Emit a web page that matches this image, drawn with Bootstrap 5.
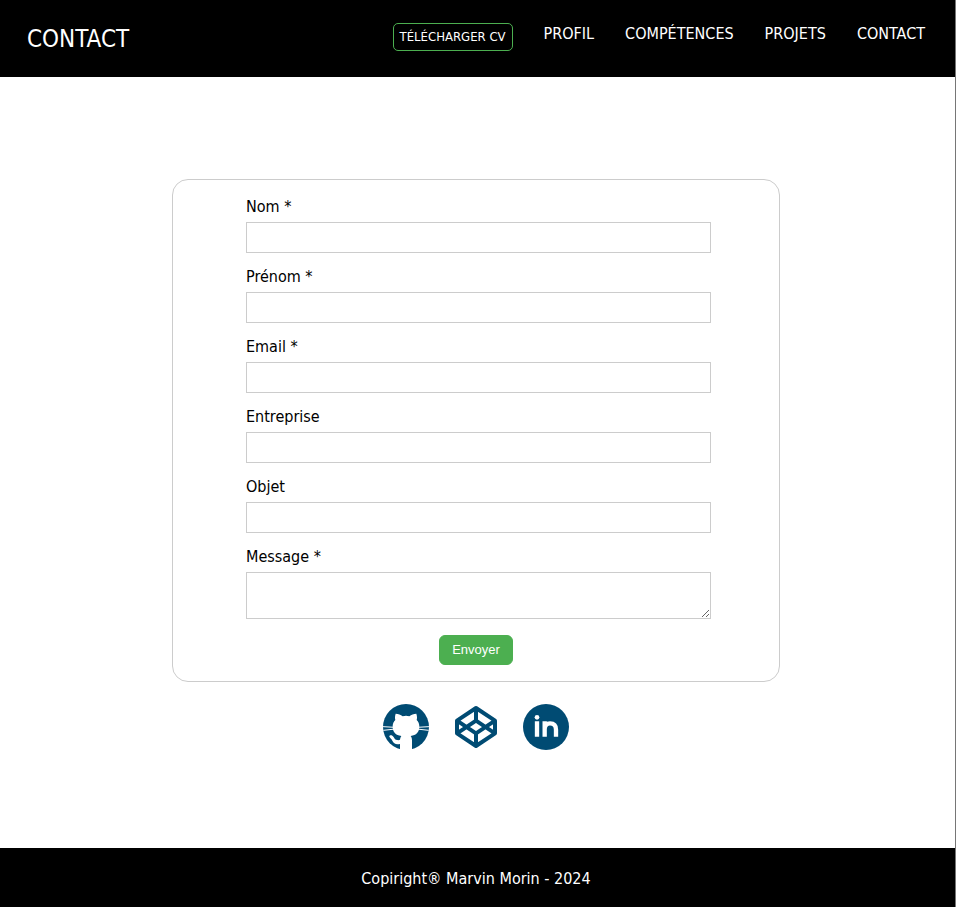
<!DOCTYPE html>
<html lang="fr">
<head>
<meta charset="utf-8">
<meta name="viewport" content="width=device-width, initial-scale=1">
<title>Contact</title>
<link href="https://cdn.jsdelivr.net/npm/bootstrap@5.3.0/dist/css/bootstrap.min.css" rel="stylesheet">
<style>
  body { font-family: "DejaVu Sans Condensed", "Noto Sans", sans-serif; font-size: 16px; line-height: 22px; color: #000; background: #fff; border-right: 1px solid #767676; }
  .site-header { background: #000; padding: 23px 30px 22px 27px; }
  .site-title { font-size: 24px; line-height: 32px; font-weight: 400; }
  .site-links { gap: 31px; }
  .btn-cv { --bs-btn-color: #fff; --bs-btn-border-color: #4caf50; --bs-btn-hover-color: #fff; --bs-btn-hover-bg: #4caf50; --bs-btn-padding-x: 6px; --bs-btn-padding-y: 2px; --bs-btn-font-size: 13px; --bs-btn-line-height: 22px; --bs-btn-border-radius: 5px; }
  .contact-main { padding: 102px 3px 98px 0; }
  .contact-form { width: 100%; max-width: 608px; padding: 16px 0; border: 1px solid #ccc; border-radius: 16px; }
  .form-fields { padding: 0 68px 0 73px; }
  .contact-form .form-label { margin-bottom: 4px; }
  .contact-form .form-control { height: 31px; border: 1px solid #ccc; border-radius: 0; padding: 4px 8px; }
  .contact-form textarea.form-control { height: 47px; min-height: 47px; }
  .field { margin-bottom: 13px; }
  .btn-send { --bs-btn-color: #fff; --bs-btn-bg: #4caf50; --bs-btn-border-color: #4caf50; --bs-btn-hover-color: #fff; --bs-btn-hover-bg: #3d9141; --bs-btn-padding-x: 12px; --bs-btn-padding-y: 3px; --bs-btn-font-size: 13px; --bs-btn-line-height: 22px; --bs-btn-border-radius: 6px; font-family: "Liberation Sans", sans-serif; }
  .social { color: #004b73; gap: 24px; margin-top: 22px; }
  .social svg { width: 46px; height: 46px; display: block; }
  .site-footer { background: #000; padding: 20px 3px 17px 0; }
</style>
<script src="https://cdn.jsdelivr.net/npm/bootstrap@5.3.0/dist/js/bootstrap.bundle.min.js" defer></script>
</head>
<body class="d-flex flex-column min-vh-100">
<header class="site-header d-flex flex-wrap justify-content-between align-items-start text-white">
  <h1 class="site-title m-0">CONTACT</h1>
  <nav class="site-links d-flex flex-wrap align-items-start" aria-label="Navigation principale">
    <button type="button" class="btn btn-cv">TÉLÉCHARGER CV</button>
    <a class="text-white text-decoration-none" href="#profil">PROFIL</a>
    <a class="text-white text-decoration-none" href="#competences">COMPÉTENCES</a>
    <a class="text-white text-decoration-none" href="#projets">PROJETS</a>
    <a class="text-white text-decoration-none" href="#contact">CONTACT</a>
  </nav>
</header>
<main id="contact" class="contact-main flex-grow-1 d-flex flex-column align-items-center">
  <form class="contact-form">
    <div class="form-fields">
      <div class="field"><label class="form-label d-block" for="nom">Nom *</label><input class="form-control" id="nom" type="text" required></div>
      <div class="field"><label class="form-label d-block" for="prenom">Prénom *</label><input class="form-control" id="prenom" type="text" required></div>
      <div class="field"><label class="form-label d-block" for="email">Email *</label><input class="form-control" id="email" type="email" required></div>
      <div class="field"><label class="form-label d-block" for="entreprise">Entreprise</label><input class="form-control" id="entreprise" type="text"></div>
      <div class="field"><label class="form-label d-block" for="objet">Objet</label><input class="form-control" id="objet" type="text"></div>
      <div class="mb-3"><label class="form-label d-block" for="message">Message *</label><textarea class="form-control" id="message" required></textarea></div>
    </div>
    <button type="submit" class="btn btn-send d-block mx-auto">Envoyer</button>
  </form>
  <div class="social d-flex">
    <a class="text-reset" href="#github" aria-label="GitHub">
      <svg viewBox="39 27 138 138" aria-hidden="true">
        <circle cx="108" cy="96" r="69" fill="currentColor"/>
        <path fill="#fff" d="M90 166v-19c-13 3-19-2-23-10-2-5-6-8-9-12-1-4 5-6 9-3 6 4 6 12 14 13 4 1 7 0 9-1 1-5 2-8 4-11-17-2-26-11-26-29 0-8 3-14 8-19-2-6-1-13 1-19 8 0 15 3 21 8 7-2 13-2 20 0 6-5 13-8 21-8 2 6 3 13 1 19 5 5 8 11 8 19 0 18-9 27-26 29 3 4 4 8 4 14v29z"/>
        <path fill="none" stroke="#fff" stroke-width="3" d="M39 95l36 2M40 106l36-4M177 95l-36 2M176 106l-36-4"/>
      </svg>
    </a>
    <a class="text-reset" href="#codepen" aria-label="CodePen">
      <svg viewBox="39 27 138 138" fill="none" stroke="currentColor" stroke-width="12" stroke-linejoin="round" aria-hidden="true">
        <path d="M108 39l57 38v38l-57 38-57-38V77zM108 39v38M108 115v38M51 77l57 38 57-38M51 115l57-38 57 38"/>
      </svg>
    </a>
    <a class="text-reset" href="#linkedin" aria-label="LinkedIn">
      <svg viewBox="39 27 138 138" aria-hidden="true">
        <circle cx="108" cy="96" r="69" fill="currentColor"/>
        <circle cx="81" cy="67" r="7" fill="#fff"/>
        <path fill="none" stroke="#fff" stroke-width="13" d="M81 79v46M104 79v46M104 103C104 91 110 85 120 85c12 0 18 6 18 19v21"/>
      </svg>
    </a>
  </div>
</main>
<footer class="site-footer text-white text-center">Copiright® Marvin Morin - 2024</footer>
</body>
</html>
